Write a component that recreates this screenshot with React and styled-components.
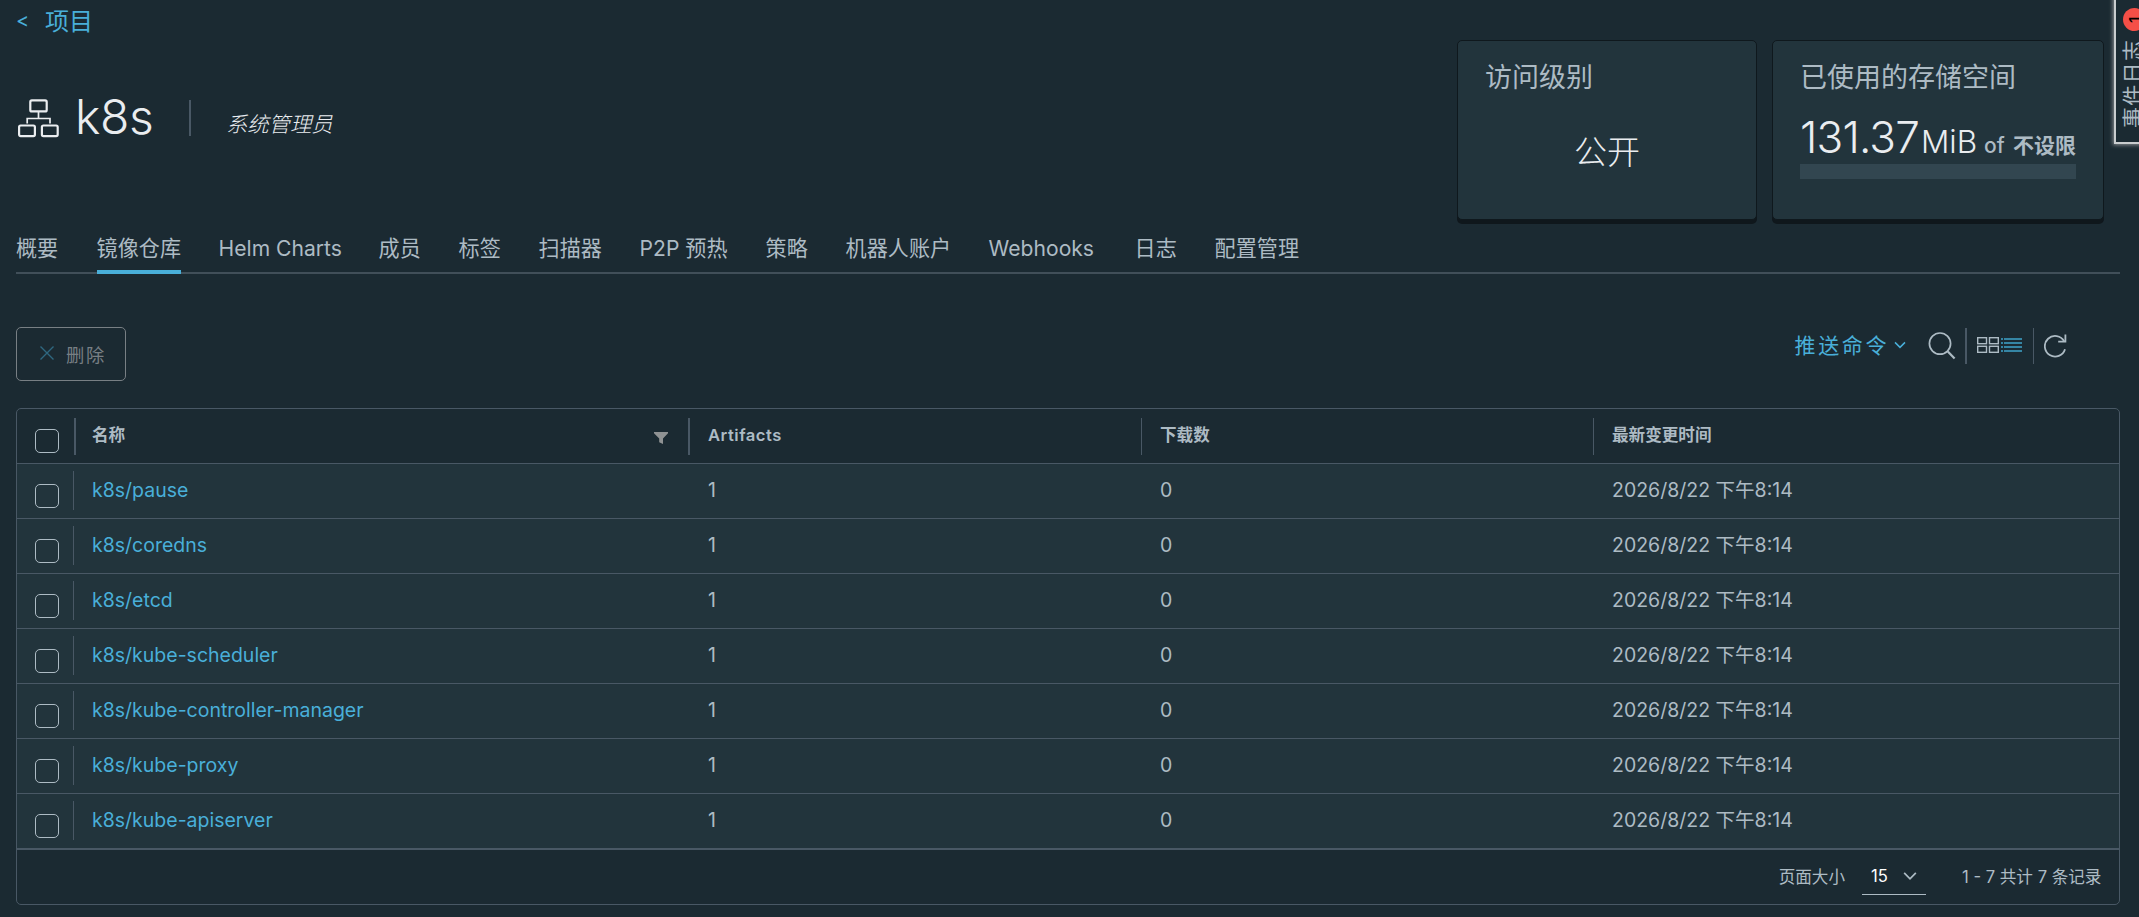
import styled, { createGlobalStyle } from "styled-components";

const tabs = [
  { label: "概要", width: 42 },
  { label: "镜像仓库", width: 84, active: true },
  { label: "Helm Charts", width: 122 },
  { label: "成员", width: 42 },
  { label: "标签", width: 42 },
  { label: "扫描器", width: 63 },
  { label: "P2P 预热", width: 88 },
  { label: "策略", width: 42 },
  { label: "机器人账户", width: 105 },
  { label: "Webhooks", width: 108 },
  { label: "日志", width: 42 },
  { label: "配置管理", width: 84 },
];

const repositories = [
  "k8s/pause",
  "k8s/coredns",
  "k8s/etcd",
  "k8s/kube-scheduler",
  "k8s/kube-controller-manager",
  "k8s/kube-proxy",
  "k8s/kube-apiserver",
].map((name) => ({
  name,
  artifacts: 1,
  pulls: 0,
  updated: "2026/8/22 下午8:14",
}));

const ProjectIcon = () => (
  <svg width="42" height="40" viewBox="0 0 42 40" fill="none" stroke="#eaedf0">
    <rect x="13.3" y="2.4" width="16.4" height="11" rx="1.5" strokeWidth="2.2" />
    <rect x="2.1" y="27.5" width="15.8" height="10.6" rx="1.5" strokeWidth="2.2" />
    <rect x="24.9" y="27.5" width="15.8" height="10.6" rx="1.5" strokeWidth="2.2" />
    <path d="M21.5 14V20.5M10.2 25.5V20.5H33V25.5" strokeWidth="1.7" />
  </svg>
);

const Chevron = ({ size, color }) => (
  <svg width={size} height={size} viewBox="0 0 12 12" fill="none">
    <path d="M1 3.4L6 8.4L11 3.4" stroke={color} strokeWidth="1.5" />
  </svg>
);

const SearchIcon = () => (
  <svg width="28" height="28" viewBox="0 0 28 28" fill="none" stroke="#adbbc4">
    <circle cx="12" cy="11.6" r="10.6" strokeWidth="1.7" />
    <path d="M19.8 19.6L26.6 26.6" strokeWidth="2.2" />
  </svg>
);

const CardsIcon = () => (
  <svg width="22" height="16" viewBox="0 0 22 16" fill="none" stroke="#adbbc4">
    <rect x="0.7" y="0.7" width="8.8" height="6" strokeWidth="1.4" />
    <rect x="12.5" y="0.7" width="8.8" height="6" strokeWidth="1.4" />
    <rect x="0.7" y="9.3" width="8.8" height="6" strokeWidth="1.4" />
    <rect x="12.5" y="9.3" width="8.8" height="6" strokeWidth="1.4" />
  </svg>
);

const ListIcon = () => (
  <svg width="21" height="14" viewBox="0 0 21 14" fill="#3585a4">
    {[0, 4, 8, 12].map((y) => (
      <g key={y}>
        <rect y={y} width="2" height="2" />
        <rect x="3" y={y} width="18" height="2" />
      </g>
    ))}
  </svg>
);

const RefreshIcon = () => (
  <svg width="23" height="24" viewBox="0 0 23 24" fill="none" stroke="#adbbc4">
    <path d="M21 15.2A10.3 10.3 0 1 1 20.2 7.4" strokeWidth="1.8" />
    <path d="M21.4 0.6V7.7H14.2" strokeWidth="1.8" />
  </svg>
);

const FilterIcon = () => (
  <svg width="14" height="12" viewBox="0 0 14 12" fill="#8f9293">
    <path d="M0 0H14V1.2L9 6.6V12L5.2 10.2V6.6L0 1.2Z" />
  </svg>
);

const App = () => {
  return (
    <Page>
      <GlobalStyle />
      <Breadcrumb>
        <span>&lt;</span>
        <a>项目</a>
      </Breadcrumb>
      <Header>
        <Title>
          <ProjectIcon />
          <h1>k8s</h1>
          <em>系统管理员</em>
        </Title>
        <Cards>
          <Card $width={300}>
            <h2>访问级别</h2>
            <Access>公开</Access>
          </Card>
          <Card $width={332}>
            <h2>已使用的存储空间</h2>
            <Quota>
              <Amount>131.37</Amount>
              <Unit>MiB</Unit>
              <Of>of</Of>
              <b>不设限</b>
            </Quota>
            <Progress />
          </Card>
        </Cards>
      </Header>
      <Tabs>
        {tabs.map((tab) => (
          <Tab key={tab.label} $width={tab.width} $active={tab.active}>
            {tab.label}
          </Tab>
        ))}
      </Tabs>
      <Toolbar>
        <DeleteButton disabled>
          <svg width="14" height="14" viewBox="0 0 14 14" stroke="#2f6880" strokeWidth="1.4">
            <path d="M0.5 0.5L13.5 13.5M13.5 0.5L0.5 13.5" />
          </svg>
          <span>删除</span>
        </DeleteButton>
        <Actions>
          <PushCommand>
            <span>推送命令</span>
            <Chevron size={12} color="#49afd9" />
          </PushCommand>
          <SearchIcon />
          <Divider $width={2} />
          <ViewSwitch>
            <CardsIcon />
            <ListIcon />
          </ViewSwitch>
          <Divider $width={1} />
          <RefreshIcon />
        </Actions>
      </Toolbar>
      <Grid>
        <HeadRow>
          <SelectCell $head>
            <Checkbox />
          </SelectCell>
          <HeadCell $divider={2}>
            名称
            <FilterIcon />
          </HeadCell>
          <HeadCell $divider={1} $latin>
            Artifacts
          </HeadCell>
          <HeadCell $divider={1}>下载数</HeadCell>
          <HeadCell>最新变更时间</HeadCell>
        </HeadRow>
        {repositories.map((repo) => (
          <Row key={repo.name}>
            <SelectCell>
              <Checkbox />
            </SelectCell>
            <Cell>
              <RepoLink>{repo.name}</RepoLink>
            </Cell>
            <Cell>{repo.artifacts}</Cell>
            <Cell>{repo.pulls}</Cell>
            <Cell>{repo.updated}</Cell>
          </Row>
        ))}
        <Footer>
          <span>页面大小</span>
          <PageSize>
            15
            <Chevron size={14} color="#adbbc4" />
          </PageSize>
          <Range>1 - 7 共计 7 条记录</Range>
        </Footer>
      </Grid>
      <EventLog>
        <span>事件日志</span>
        <Badge>1</Badge>
      </EventLog>
    </Page>
  );
};

export default App;

const GlobalStyle = createGlobalStyle`
  * {
    box-sizing: border-box;
  }

  body {
    margin: 0;
    background: #1b2a32;
  }

  h1, h2 {
    margin: 0;
    font-weight: 400;
  }

  svg {
    display: block;
    flex: none;
  }
`;

const Page = styled.div`
  position: relative;
  width: 100%;
  height: 917px;
  padding: 0 19px 0 16px;
  overflow: hidden;
  background: #1b2a32;
  color: #adbbc4;
  font-family: Inter, "Noto Sans CJK SC", sans-serif;
  font-size: 19.5px;
  font-weight: 400;
  white-space: nowrap;
`;

const Breadcrumb = styled.div`
  display: flex;
  gap: 15px;
  height: 40px;
  line-height: 44px;
  font-size: 24px;
  color: #49afd9;

  span {
    width: 14px;
    font-size: 20px;
    line-height: 41px;
  }
`;

const Header = styled.header`
  display: flex;
  justify-content: space-between;
  height: 184px;
  padding-right: 16px;
`;

const Title = styled.div`
  display: flex;
  align-items: center;
  height: 36px;
  margin: 60px 0 0 1px;
  color: #eaedf0;

  h1 {
    width: 116px;
    height: 36px;
    margin-left: 16px;
    border-right: 2px solid #495865;
    font-size: 48px;
    font-weight: 300;
    line-height: 34px;
    letter-spacing: -0.3px;
  }

  em {
    margin: 9px 0 0 35px;
    font-size: 21.3px;
    font-weight: 300;
  }
`;

const Cards = styled.div`
  display: flex;
  gap: 15px;
`;

const Card = styled.section`
  width: ${(props) => props.$width}px;
  height: 180px;
  padding: 18px 27px 0;
  border: 1px solid #0f181d;
  border-radius: 5px;
  background: #22343c;
  box-shadow: 0 4px 0 0 #0f171c;

  h2 {
    font-size: 27px;
    line-height: 38px;
  }
`;

const Access = styled.p`
  margin: 32px 0 0;
  text-align: center;
  font-size: 33px;
  font-weight: 300;
  line-height: 47px;
  color: #eaedf0;
`;

const Quota = styled.div`
  display: flex;
  align-items: baseline;
  height: 46px;
  margin-top: 17px;
  line-height: 46px;
  font-size: 21px;

  b {
    font-weight: 700;
  }
`;

const Amount = styled.span`
  width: 121px;
  font-size: 44px;
  font-weight: 300;
  letter-spacing: -0.8px;
  color: #eaedf0;
`;

const Unit = styled.span`
  width: 63px;
  font-size: 31.5px;
  font-weight: 300;
  color: #eaedf0;
`;

const Of = styled.span`
  width: 29px;
  font-weight: 500;
`;

const Progress = styled.div`
  height: 15px;
  margin-top: 4px;
  background: #324650;
`;

const Tabs = styled.nav`
  display: flex;
  gap: 38px;
  height: 50px;
  border-bottom: 2px solid #414f59;
`;

const Tab = styled.a`
  width: ${(props) => props.$width}px;
  height: 50px;
  margin-left: ${(props) => (props.$active ? "0.6px" : 0)};
  font-size: 21.1px;
  line-height: 50px;
  box-shadow: ${(props) => (props.$active ? "inset 0 -4px 0 #49afd9" : "none")};
`;

const Toolbar = styled.div`
  display: flex;
  justify-content: space-between;
  height: 134px;
  padding-top: 53px;
`;

const DeleteButton = styled.button`
  display: flex;
  align-items: center;
  gap: 12px;
  width: 110px;
  height: 54px;
  padding: 0 0 1px 23px;
  border: 1px solid #787f84;
  border-radius: 5px;
  background: transparent;
  color: #787f84;
  font: inherit;
  font-size: 18.3px;
  letter-spacing: 1.8px;

  svg {
    margin-bottom: 1px;
  }
`;

const Actions = styled.div`
  display: flex;
  align-items: center;
  height: 36px;
  margin: 1px 53px 0 0;
`;

const PushCommand = styled.a`
  display: flex;
  align-items: center;
  gap: 5px;
  margin-right: 22px;
  font-size: 21px;
  letter-spacing: 2.6px;
  color: #49afd9;

  span {
    margin-bottom: 4px;
  }

  svg {
    margin-bottom: 3px;
  }
`;

const Divider = styled.div`
  width: ${(props) => props.$width}px;
  height: 36px;
  margin: 0 10px 0 9px;
  background: #495865;
`;

const ViewSwitch = styled.div`
  display: flex;
  align-items: center;
  gap: 2px;
  margin: 0 2px 2px 0;
`;

const Grid = styled.div`
  border: 1px solid #495865;
  border-radius: 5px;
`;

const Row = styled.div`
  display: grid;
  grid-template-columns: 57px 616px 452px 452px 1fr;
  height: 55px;
  border-bottom: 1px solid #495865;
  background: #22343c;
`;

const HeadRow = styled(Row)`
  background: transparent;
  font-size: 16.6px;
  font-weight: 700;
`;

const SelectCell = styled.div`
  height: ${(props) => (props.$head ? 37 : 39)}px;
  margin-top: ${(props) => (props.$head ? 9 : 7)}px;
  padding: ${(props) => (props.$head ? 11 : 13)}px 0 0 18px;
  border-right: ${(props) => (props.$head ? 0 : 1)}px solid #495865;
`;

const Checkbox = styled.div`
  width: 24px;
  height: 24px;
  border: 1px solid #adbbc4;
  border-radius: 5px;
`;

const Cell = styled.div`
  padding-left: 18px;
  line-height: 53px;
`;

const HeadCell = styled.div`
  display: flex;
  justify-content: space-between;
  height: 37px;
  margin-top: 9px;
  padding: 0 20px 0 18px;
  border-right: ${(props) => props.$divider || 0}px solid #495865;
  line-height: 35px;
  font-weight: ${(props) => (props.$latin ? 600 : 700)};
  letter-spacing: ${(props) => (props.$latin ? 0.5 : 0)}px;

  &:nth-child(2) {
    border-left: 2px solid #495865;
    padding-left: 16px;
  }

  svg {
    margin-top: 14px;
  }
`;

const RepoLink = styled.a`
  color: #49afd9;
`;

const Footer = styled.div`
  display: flex;
  align-items: center;
  justify-content: flex-end;
  height: 55px;
  padding: 0 17px 2px 0;
  border-top: 1px solid #495865;
  font-size: 16.6px;
`;

const PageSize = styled.div`
  display: flex;
  align-items: center;
  justify-content: space-between;
  width: 64px;
  height: 38px;
  margin: 0 36px 0 17px;
  padding: 0 9px;
  border-bottom: 1px solid #adbbc4;
  color: #fff;
`;

const Range = styled.span`
  width: 140px;
`;

const EventLog = styled.aside`
  position: absolute;
  top: -13px;
  right: -16px;
  display: flex;
  align-items: center;
  gap: 8px;
  height: 157px;
  width: 41px;
  padding-top: 14px;
  border: 2px solid #c9ccce;
  background: #1b2a32;
  box-shadow: 0 0 4px 1px #8b8f93;
  writing-mode: vertical-rl;
  text-orientation: sideways;
  transform: rotate(180deg);
  font-size: 21px;
  letter-spacing: 1.3px;

  span {
    margin-left: 8px;
  }
`;

const Badge = styled.b`
  display: flex;
  align-items: center;
  justify-content: center;
  width: 23px;
  height: 23px;
  border-radius: 50%;
  background: #f54f47;
  color: #000;
  font-size: 16px;
  font-weight: 500;
  letter-spacing: 0;
`;
